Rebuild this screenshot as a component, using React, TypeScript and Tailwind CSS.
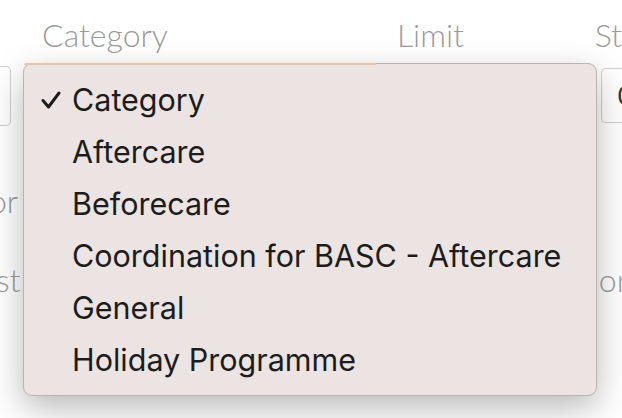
import React from 'react';

const options = [
  'Category',
  'Aftercare',
  'Beforecare',
  'Coordination for BASC - Aftercare',
  'General',
  'Holiday Programme',
];

const Check = () => (
  <svg width="20" height="18" viewBox="0 0 20 18" className="shrink-0">
    <path
      d="M2 9.5 L7.5 16 L18 2"
      fill="none"
      stroke="#1c1c1c"
      strokeWidth="3"
      strokeLinecap="round"
      strokeLinejoin="round"
    />
  </svg>
);

export default function App() {
  return (
    <div className="relative w-[622px] h-[418px] overflow-hidden bg-white font-['Lato',sans-serif] font-light text-[32px] text-[#9b9b9b]">
      {/* form behind the native popup */}
      <div className="flex flex-col">
        <div className="flex h-[66px] items-center pt-[3px]">
          <span className="w-[401px] pl-[42px]">Category</span>
          <span className="w-[200px]">Limit</span>
          <span>St</span>
        </div>
        <div className="flex h-[60px] items-stretch">
          <div className="w-[11px] rounded-r-[5px] border border-l-0 border-[#cfcfcf]" />
          <div className="flex-1" />
          <div className="w-[21px] mt-[2px] mb-[3px] rounded-l-[5px] border border-r-0 border-[#cfcfcf] pl-[15px] flex items-center text-[#333] font-['Inter',sans-serif] font-normal text-[26px] overflow-hidden">
            0
          </div>
        </div>
        <div className="flex h-[80px] mt-[35px] items-center">
          <span className="-ml-[11px]">or</span>
        </div>
        <div className="flex h-[78px] items-center justify-between">
          <span className="-ml-[4px]">st</span>
          <span className="-mr-[6px]">or</span>
        </div>
      </div>

      {/* open select popup */}
      <div className="absolute left-[23px] top-[63px] w-[574px] h-[333px] rounded-[9px] border border-[#b9b4b3] bg-[#ece4e3] shadow-[0_12px_34px_rgba(0,0,0,0.28)] font-['Inter',sans-serif] font-normal text-[30.5px] text-[#1c1c1c] py-[10px]">
        <div className="absolute left-0 top-[-1px] h-[2px] w-[352px] rounded-tl-[9px] bg-[#e7c4a6]" />
        {options.map((o, i) => (
          <div key={o} className="flex h-[52px] items-center">
            <div className="w-[48px] flex justify-end pr-[11px]">{i === 0 && <Check />}</div>
            <span>{o}</span>
          </div>
        ))}
      </div>
    </div>
  );
}
